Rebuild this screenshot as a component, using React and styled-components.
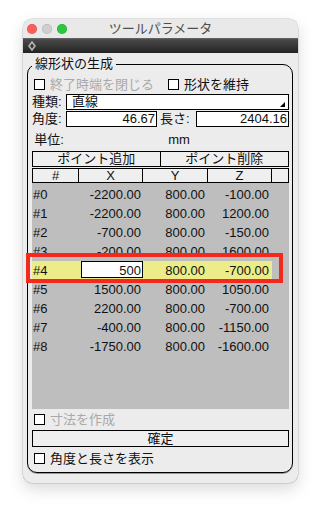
import styled, { createGlobalStyle } from "styled-components";

const GlobalStyle = createGlobalStyle`
  html, body {
    margin: 0;
    background: #fff;
  }
  body {
    font-family: "Liberation Sans", "Noto Sans CJK JP", sans-serif;
    font-size: 13px;
    line-height: 16px;
    color: #111;
  }
`;

const Page = styled.div`
  padding: 19px 23px 27px;
`;

const Window = styled.div`
  width: 275px;
  height: 464px;
  background: #ececec;
  border-radius: 9px;
  box-shadow: 0 0 0 0.5px rgba(0, 0, 0, 0.2), 0 6px 16px rgba(0, 0, 0, 0.15);
  overflow: hidden;
  display: flex;
  flex-direction: column;
`;

const TitleBar = styled.div`
  height: 19px;
  flex: none;
  display: grid;
  grid-template-columns: 1fr auto 1fr;
  align-items: center;
  padding: 0 4px;
  background: #e9e9e9;
`;

const Lights = styled.div`
  display: flex;
  gap: 5px;
`;

const Light = styled.span`
  width: 10px;
  height: 10px;
  border-radius: 50%;
  background: ${({ color }) => color};
  box-shadow: inset 0 0 0 0.5px rgba(0, 0, 0, 0.15);
`;

const Title = styled.div`
  color: #4d4d4d;
  line-height: 19px;
`;

const ToolStrip = styled.div`
  height: 15px;
  flex: none;
  display: flex;
  align-items: center;
  padding-left: 5px;
  background: linear-gradient(#6a6a6a 0, #484848 12%, #232323 100%);
`;

const Content = styled.div`
  flex: 1;
  display: flex;
  flex-direction: column;
  padding: 3px 5px 10px 4px;
`;

const Group = styled.fieldset`
  flex: 1;
  min-width: 0;
  margin: 0;
  padding: 0 3px 0 4px;
  border: 1px solid #000;
  border-radius: 10px;
  box-shadow: 0 1px 0 rgba(0, 0, 0, 0.35);
  display: flex;
  flex-direction: column;
`;

const Legend = styled.legend`
  padding: 0 3px;
  line-height: 16px;
`;

const CheckRow = styled.div`
  height: ${({ h }) => h}px;
  margin-top: ${({ mt }) => mt || 0}px;
  display: flex;
  align-items: center;
  gap: 14px;
  padding-left: 2px;
`;

const CheckLabel = styled.label`
  display: flex;
  align-items: center;
  gap: 5px;
  color: ${({ disabled }) => (disabled ? "#a9a9a9" : "#111")};
`;

const Box = styled.span`
  width: 11px;
  height: 11px;
  box-sizing: border-box;
  border: 1px solid #000;
  background: #fff;
  flex: none;
`;

const SelectRow = styled.div`
  height: 17px;
  display: flex;
  align-items: flex-end;
`;

const FieldLabel = styled.span`
  width: 34px;
  flex: none;
  align-self: center;
`;

const Select = styled.div`
  flex: 1;
  height: 16px;
  box-sizing: border-box;
  border: 1px solid #000;
  background: #fff;
  display: flex;
  justify-content: space-between;
  align-items: center;
  padding: 0 3px 0 5px;
  line-height: 14px;
`;

const Arrow = styled.span`
  align-self: flex-end;
  margin-bottom: 2px;
  width: 0;
  height: 0;
  border-left: 5px solid transparent;
  border-bottom: 5px solid #000;
`;

const FieldGrid = styled.div`
  height: ${({ h }) => h}px;
  display: grid;
  grid-template-columns: 34px 91px 39px 1fr;
  align-items: ${({ align }) => align || "end"};
  padding-top: ${({ pt }) => pt || 0}px;
  box-sizing: border-box;
`;

const SecondLabel = styled.span`
  padding-left: ${({ pad }) => pad || 3}px;
  align-self: center;
`;

const Field = styled.div`
  height: 16px;
  box-sizing: border-box;
  border: 1px solid #000;
  background: #fff;
  text-align: right;
  padding-right: 1px;
  line-height: 14px;
`;

const ButtonRow = styled.div`
  display: grid;
  grid-template-columns: 1fr 1fr;
  margin-top: 1px;
`;

const Button = styled.div`
  height: ${({ h }) => h || 16}px;
  box-sizing: border-box;
  border: 1px solid #000;
  background: #efefef;
  text-align: center;
  line-height: ${({ h }) => (h || 16) - 2}px;
  & + & {
    margin-left: -1px;
  }
`;

const columns = "47px 64px 65px 64px 1fr";

const Header = styled.div`
  display: grid;
  grid-template-columns: ${columns};
  margin-top: 1px;
`;

const HeadCell = styled.div`
  height: 15px;
  box-sizing: border-box;
  border: 1px solid #000;
  background: #efefef;
  text-align: center;
  line-height: 13px;
  & + & {
    margin-left: -1px;
  }
`;

const Body = styled.div`
  height: 226px;
  padding-top: 2px;
  box-sizing: border-box;
  background: #bebebe;
`;

const Row = styled.div`
  position: relative;
  height: 19px;
  display: grid;
  grid-template-columns: ${columns};
  line-height: 19px;
`;

const Cell = styled.div`
  text-align: ${({ align }) => align};
  padding: 0 ${({ pr }) => pr}px 0 ${({ pl }) => pl}px;
  background: ${({ selected }) => (selected ? "#ecec88" : "transparent")};
`;

const EditCell = styled.div`
  margin-left: 2px;
  height: 17px;
  box-sizing: border-box;
  border: 1px solid #000;
  background: #fff;
  text-align: right;
  padding-right: 1px;
  line-height: 17px;
`;

const Callout = styled.div`
  position: absolute;
  left: -6px;
  top: -8px;
  width: 257px;
  height: 30px;
  box-sizing: border-box;
  border: 4px solid #f4281c;
  pointer-events: none;
`;

const points = [
  ["-2200.00", "800.00", "-100.00"],
  ["-2200.00", "800.00", "1200.00"],
  ["-700.00", "800.00", "-150.00"],
  ["-200.00", "800.00", "1600.00"],
  ["500", "800.00", "-700.00"],
  ["1500.00", "800.00", "1050.00"],
  ["2200.00", "800.00", "-700.00"],
  ["-400.00", "800.00", "-1150.00"],
  ["-1750.00", "800.00", "-1600.00"],
];

const SELECTED = 4;

const Check = ({ children, disabled }) => (
  <CheckLabel disabled={disabled}>
    <Box />
    {children}
  </CheckLabel>
);

const App = () => (
  <Page>
    <GlobalStyle />
    <Window>
      <TitleBar>
        <Lights>
          <Light color="#fe5f57" />
          <Light color="#cfcfcf" />
          <Light color="#28c840" />
        </Lights>
        <Title>ツールパラメータ</Title>
        <span />
      </TitleBar>
      <ToolStrip>
        <svg width="8" height="10" viewBox="0 0 8 10">
          <polygon points="4,1 7,5 4,9 1,5" fill="none" stroke="#b4b4b4" strokeWidth="1.6" />
        </svg>
      </ToolStrip>
      <Content>
        <Group>
          <Legend>線形状の生成</Legend>
          <CheckRow h={17} mt={4}>
            <Check disabled>終了時端を閉じる</Check>
            <Check>形状を維持</Check>
          </CheckRow>
          <SelectRow>
            <FieldLabel>種類:</FieldLabel>
            <Select>
              <span>直線</span>
              <Arrow />
            </Select>
          </SelectRow>
          <FieldGrid h={17}>
            <FieldLabel>角度:</FieldLabel>
            <Field>46.67</Field>
            <SecondLabel>長さ:</SecondLabel>
            <Field>2404.16</Field>
          </FieldGrid>
          <FieldGrid h={23} align="center" pt={3}>
            <FieldLabel>単位:</FieldLabel>
            <span />
            <SecondLabel pad={5}>mm</SecondLabel>
          </FieldGrid>
          <ButtonRow>
            <Button>ポイント追加</Button>
            <Button>ポイント削除</Button>
          </ButtonRow>
          <Header>
            <HeadCell>#</HeadCell>
            <HeadCell>X</HeadCell>
            <HeadCell>Y</HeadCell>
            <HeadCell>Z</HeadCell>
            <HeadCell />
          </Header>
          <Body>
            {points.map(([x, y, z], i) => {
              const selected = i === SELECTED;
              return (
                <Row key={i}>
                  <Cell align="left" pl={1} pr={0} selected={selected}>
                    #{i}
                  </Cell>
                  <Cell align="right" pl={0} pr={selected ? 0 : 2} selected={selected}>
                    {selected ? <EditCell>{x}</EditCell> : x}
                  </Cell>
                  <Cell align="right" pl={0} pr={3} selected={selected}>
                    {y}
                  </Cell>
                  <Cell align="right" pl={0} pr={3} selected={selected}>
                    {z}
                  </Cell>
                  <Cell />
                  {selected && <Callout />}
                </Row>
              );
            })}
          </Body>
          <CheckRow h={21}>
            <Check disabled>寸法を作成</Check>
          </CheckRow>
          <Button h={17}>確定</Button>
          <CheckRow h={23}>
            <Check>角度と長さを表示</Check>
          </CheckRow>
        </Group>
      </Content>
    </Window>
  </Page>
);

export default App;
